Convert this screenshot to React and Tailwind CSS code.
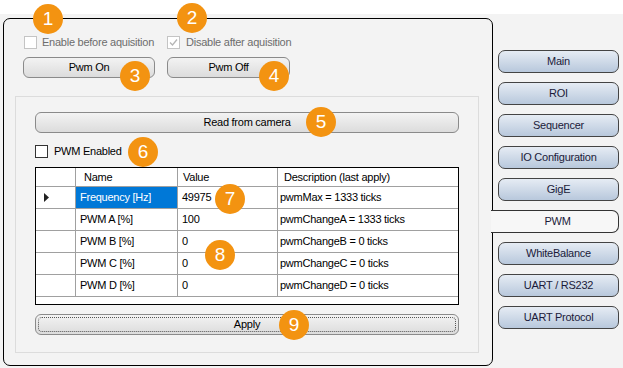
import React from "react";

const tabs = [
  "Main",
  "ROI",
  "Sequencer",
  "IO Configuration",
  "GigE",
  "PWM",
  "WhiteBalance",
  "UART / RS232",
  "UART Protocol",
];

const rows = [
  { name: "Frequency [Hz]", value: "49975", desc: "pwmMax = 1333 ticks", selected: true },
  { name: "PWM A [%]", value: "100", desc: "pwmChangeA = 1333 ticks" },
  { name: "PWM B [%]", value: "0", desc: "pwmChangeB = 0 ticks" },
  { name: "PWM C [%]", value: "0", desc: "pwmChangeC = 0 ticks" },
  { name: "PWM D [%]", value: "0", desc: "pwmChangeD = 0 ticks" },
];

// orange numbered markers laid over the screenshot
const badges = [
  { n: 1, cls: "left-[33px] top-[4px]" },
  { n: 2, cls: "left-[177px] top-[3px]" },
  { n: 3, cls: "left-[120px] top-[61px]" },
  { n: 4, cls: "left-[259px] top-[61px]" },
  { n: 5, cls: "left-[306px] top-[107px]" },
  { n: 6, cls: "left-[128px] top-[137px]" },
  { n: 7, cls: "left-[215px] top-[184px]" },
  { n: 8, cls: "left-[205px] top-[240px]" },
  { n: 9, cls: "left-[279px] top-[310px]" },
];

const WinButton = ({ children, className = "", focused = false }) => (
  <div
    className={`relative flex items-center justify-center h-[21px] rounded-[6px] border border-[#8a8a8a] bg-gradient-to-b from-[#f3f3f3] to-[#dcdcdc] text-black ${className}`}
  >
    {focused && (
      <div className="absolute inset-[2px] rounded-[4px] border border-dotted border-[#555]" />
    )}
    <span className="relative">{children}</span>
  </div>
);

const Checkbox = ({ checked = false, disabled = false }) => (
  <div
    className={`w-[13px] h-[13px] bg-white border flex items-center justify-center ${
      disabled ? "border-[#c4c4c4]" : "border-[#333]"
    }`}
  >
    {checked && (
      <svg width="9" height="9" viewBox="0 0 9 9">
        <path d="M1 4.5 L3.5 7 L8 1.5" fill="none" stroke="#b5b5b5" strokeWidth="1.3" />
      </svg>
    )}
  </div>
);

const App = () => {
  return (
    <div
      className="relative w-[623px] h-[368px] overflow-hidden bg-[#f3f3f3] text-[11px] tracking-[-0.25px] text-black"
      style={{ fontFamily: '"Liberation Sans", Arial, sans-serif' }}
    >
      <div className="h-[14px] bg-white" />

      <div className="flex">
        {/* main panel */}
        <div className="relative ml-[3px] mt-[4px] w-[490px] h-[348px] border border-black rounded-[7px] bg-[#f3f3f3] pt-[17px]">
          <div className="flex items-center h-[13px] ml-[20px]">
            <Checkbox disabled />
            <span className="ml-[5px] text-[#6d6d6d]">Enable before aquisition</span>
            <div className="ml-[13px]">
              <Checkbox disabled checked />
            </div>
            <span className="ml-[6px] text-[#6d6d6d]">Disable after aquisition</span>
          </div>

          <div className="flex mt-[8px] ml-[19px] gap-[12px]">
            <WinButton className="w-[132px]">Pwm On</WinButton>
            <WinButton className="w-[123px]">Pwm Off</WinButton>
          </div>

          {/* group box */}
          <div className="ml-[11px] mt-[18px] w-[464px] h-[257px] border border-[#dcdcdc] pl-[19px] pt-[15px]">
            <WinButton className="w-[424px]">Read from camera</WinButton>

            <div className="flex items-center mt-[12px] h-[13px]">
              <Checkbox />
              <span className="ml-[6px]">PWM Enabled</span>
            </div>

            {/* data grid */}
            <div className="mt-[9px] w-[424px] h-[138px] border border-black bg-white">
              <div className="flex h-[19px] border-b border-[#a0a0a0]">
                <div className="w-[40px] border-r border-[#a0a0a0]" />
                <div className="w-[102px] border-r border-[#a0a0a0] pl-[8px] flex items-center">Name</div>
                <div className="w-[100px] border-r border-[#a0a0a0] pl-[5px] flex items-center">Value</div>
                <div className="flex-1 pl-[6px] flex items-center">Description (last apply)</div>
              </div>
              {rows.map((r) => (
                <div key={r.name} className="flex h-[22px] border-b border-[#a0a0a0]">
                  <div className="w-[40px] border-r border-[#a0a0a0] flex items-center pl-[8px]">
                    {r.selected && (
                      <svg width="5" height="9" viewBox="0 0 5 9">
                        <path d="M0 0 L5 4.5 L0 9 Z" fill="#222" />
                      </svg>
                    )}
                  </div>
                  <div
                    className={`w-[102px] border-r border-[#a0a0a0] pl-[4px] flex items-center ${
                      r.selected ? "bg-[#0078d7] text-white" : ""
                    }`}
                  >
                    {r.name}
                  </div>
                  <div className="w-[100px] border-r border-[#a0a0a0] pl-[4px] flex items-center">{r.value}</div>
                  <div className="flex-1 pl-[2px] flex items-center">{r.desc}</div>
                </div>
              ))}
            </div>

            <WinButton className="w-[424px] mt-[9px]" focused>
              Apply
            </WinButton>
          </div>
        </div>

        {/* side navigation */}
        <div className="ml-[5px] mt-[36px] flex flex-col gap-[9px]">
          {tabs.map((t) =>
            t === "PWM" ? (
              <div
                key={t}
                className="relative -ml-[7px] w-[128px] h-[23px] flex items-center justify-center bg-[#f7f7f7] border border-l-0 border-[#333] rounded-r-[7px] text-[#1b1b3a]"
              >
                <span className="ml-[6px]">{t}</span>
              </div>
            ) : (
              <div
                key={t}
                className="w-[121px] h-[23px] flex items-center justify-center rounded-[7px] border border-[#444] bg-gradient-to-b from-[#e6ecf4] to-[#b8c8dc] text-[#1b1b3a]"
              >
                {t}
              </div>
            )
          )}
        </div>
      </div>

      {badges.map((b) => (
        <div
          key={b.n}
          className={`absolute ${b.cls} w-[30px] h-[30px] rounded-full bg-[#f39311] text-white text-[19px] tracking-normal flex items-center justify-center`}
        >
          {b.n}
        </div>
      ))}
    </div>
  );
};

export default App;
